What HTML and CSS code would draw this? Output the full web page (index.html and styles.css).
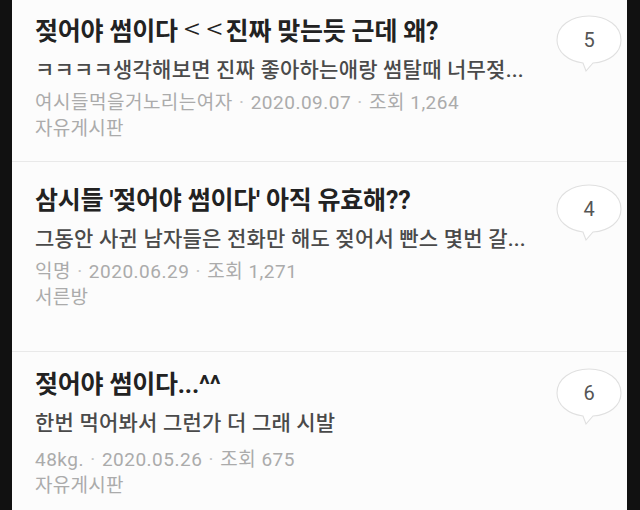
FILE: index.html
```html
<!DOCTYPE html>
<html lang="ko">
<head>
<meta charset="UTF-8">
<meta name="viewport" content="width=device-width, initial-scale=1.0">
<title>검색 결과</title>
<link rel="stylesheet" href="styles.css">
</head>
<body>
<div class="screen">
    <ul class="post-list">
        <li class="post post-first">
            <div class="post-body">
                <p class="post-title">젖어야 썸이다 <span class="angle">&lt;&lt;</span>진짜 맞는듯 근데 왜?</p>
                <p class="post-preview">ㅋㅋㅋㅋ생각해보면 진짜 좋아하는애랑 썸탈때 너무젖...</p>
                <p class="post-meta">여시들먹을거노리는여자 <span class="dot">·</span> 2020.09.07 <span class="dot">·</span> 조회 1,264</p>
                <p class="post-board">자유게시판</p>
            </div>
            <div class="bubble">
                <svg width="68" height="60" viewBox="0 0 68 60">
                    <path d="M34 2 C52 2 66 12 66 26 C66 39 54 48 38 49 L31 57 L28 49 C13 47 2 38 2 26 C2 12 16 2 34 2 Z" fill="#fff" stroke="#e0e0e0" stroke-width="1.1"/>
                </svg>
                <span class="bubble-count">5</span>
            </div>
        </li>
        <li class="post post-second">
            <div class="post-body">
                <p class="post-title">삼시들 '젖어야 썸이다' 아직 유효해??</p>
                <p class="post-preview">그동안 사귄 남자들은 전화만 해도 젖어서 빤스 몇번 갈...</p>
                <p class="post-meta">익명 <span class="dot">·</span> 2020.06.29 <span class="dot">·</span> 조회 1,271</p>
                <p class="post-board">서른방</p>
            </div>
            <div class="bubble">
                <svg width="68" height="60" viewBox="0 0 68 60">
                    <path d="M34 2 C52 2 66 12 66 26 C66 39 54 48 38 49 L31 57 L28 49 C13 47 2 38 2 26 C2 12 16 2 34 2 Z" fill="#fff" stroke="#e0e0e0" stroke-width="1.1"/>
                </svg>
                <span class="bubble-count">4</span>
            </div>
        </li>
        <li class="post post-third">
            <div class="post-body">
                <p class="post-title">젖어야 썸이다...^^</p>
                <p class="post-preview">한번 먹어봐서 그런가 더 그래 시발</p>
                <p class="post-meta">48kg. <span class="dot">·</span> 2020.05.26 <span class="dot">·</span> 조회 675</p>
                <p class="post-board">자유게시판</p>
            </div>
            <div class="bubble">
                <svg width="68" height="60" viewBox="0 0 68 60">
                    <path d="M34 2 C52 2 66 12 66 26 C66 39 54 48 38 49 L31 57 L28 49 C13 47 2 38 2 26 C2 12 16 2 34 2 Z" fill="#fff" stroke="#e0e0e0" stroke-width="1.1"/>
                </svg>
                <span class="bubble-count">6</span>
            </div>
        </li>
    </ul>
</div>
</body>
</html>
```

FILE: styles.css
```css
html, body {
    margin: 0;
    padding: 0;
    background-color: #111;
    height: 100%;
    overflow: hidden;
}
.screen {
    margin: 0 13px 0 12px;
    background-color: #fcfcfc;
    height: 510px;
    font-family: Roboto, "Noto Sans CJK KR", sans-serif;
}
.post-list {
    list-style: none;
    margin: 0;
    padding: 0;
}
.post {
    display: flex;
    justify-content: space-between;
    align-items: flex-start;
    padding: 16px 4px 19px 23px;
    border-bottom: 1px solid #e9e9e9;
}
.post-second {
    padding-top: 23px;
    padding-bottom: 40px;
}
.post-third {
    padding-top: 17px;
    border-bottom: none;
}
.post p {
    margin: 0;
    white-space: nowrap;
}
.post-title {
    font-size: 25px;
    font-weight: 700;
    line-height: 32px;
    height: 32px;
    color: #222;
    letter-spacing: -0.2px;
}
.angle {
    display: inline-block;
    font-size: 34px;
    line-height: 20px;
    font-weight: 300;
    letter-spacing: 5px;
    margin-right: -3px;
    transform: scaleY(0.8);
}
.post-preview {
    margin-top: 8px !important;
    font-size: 21px;
    font-weight: 500;
    line-height: 28px;
    color: #4a4a4a;
    letter-spacing: 0.2px;
}
.post-meta {
    margin-top: 6px !important;
    font-size: 19px;
    line-height: 26px;
    color: #ababab;
    letter-spacing: 0.5px;
}
.post-third .post-meta {
    margin-top: 10px !important;
}
.dot {
    margin: 0 1px;
    color: #c4c4c4;
}
.post-board {
    font-size: 19px;
    line-height: 26px;
    color: #ababab;
    letter-spacing: 0.3px;
}
.bubble {
    position: relative;
    width: 68px;
    height: 60px;
    margin-top: -2px;
}
.bubble svg {
    display: block;
}
.bubble-count {
    position: absolute;
    left: 0;
    right: 0;
    top: 12px;
    text-align: center;
    font-size: 20px;
    line-height: 28px;
    color: #555;
}
```
